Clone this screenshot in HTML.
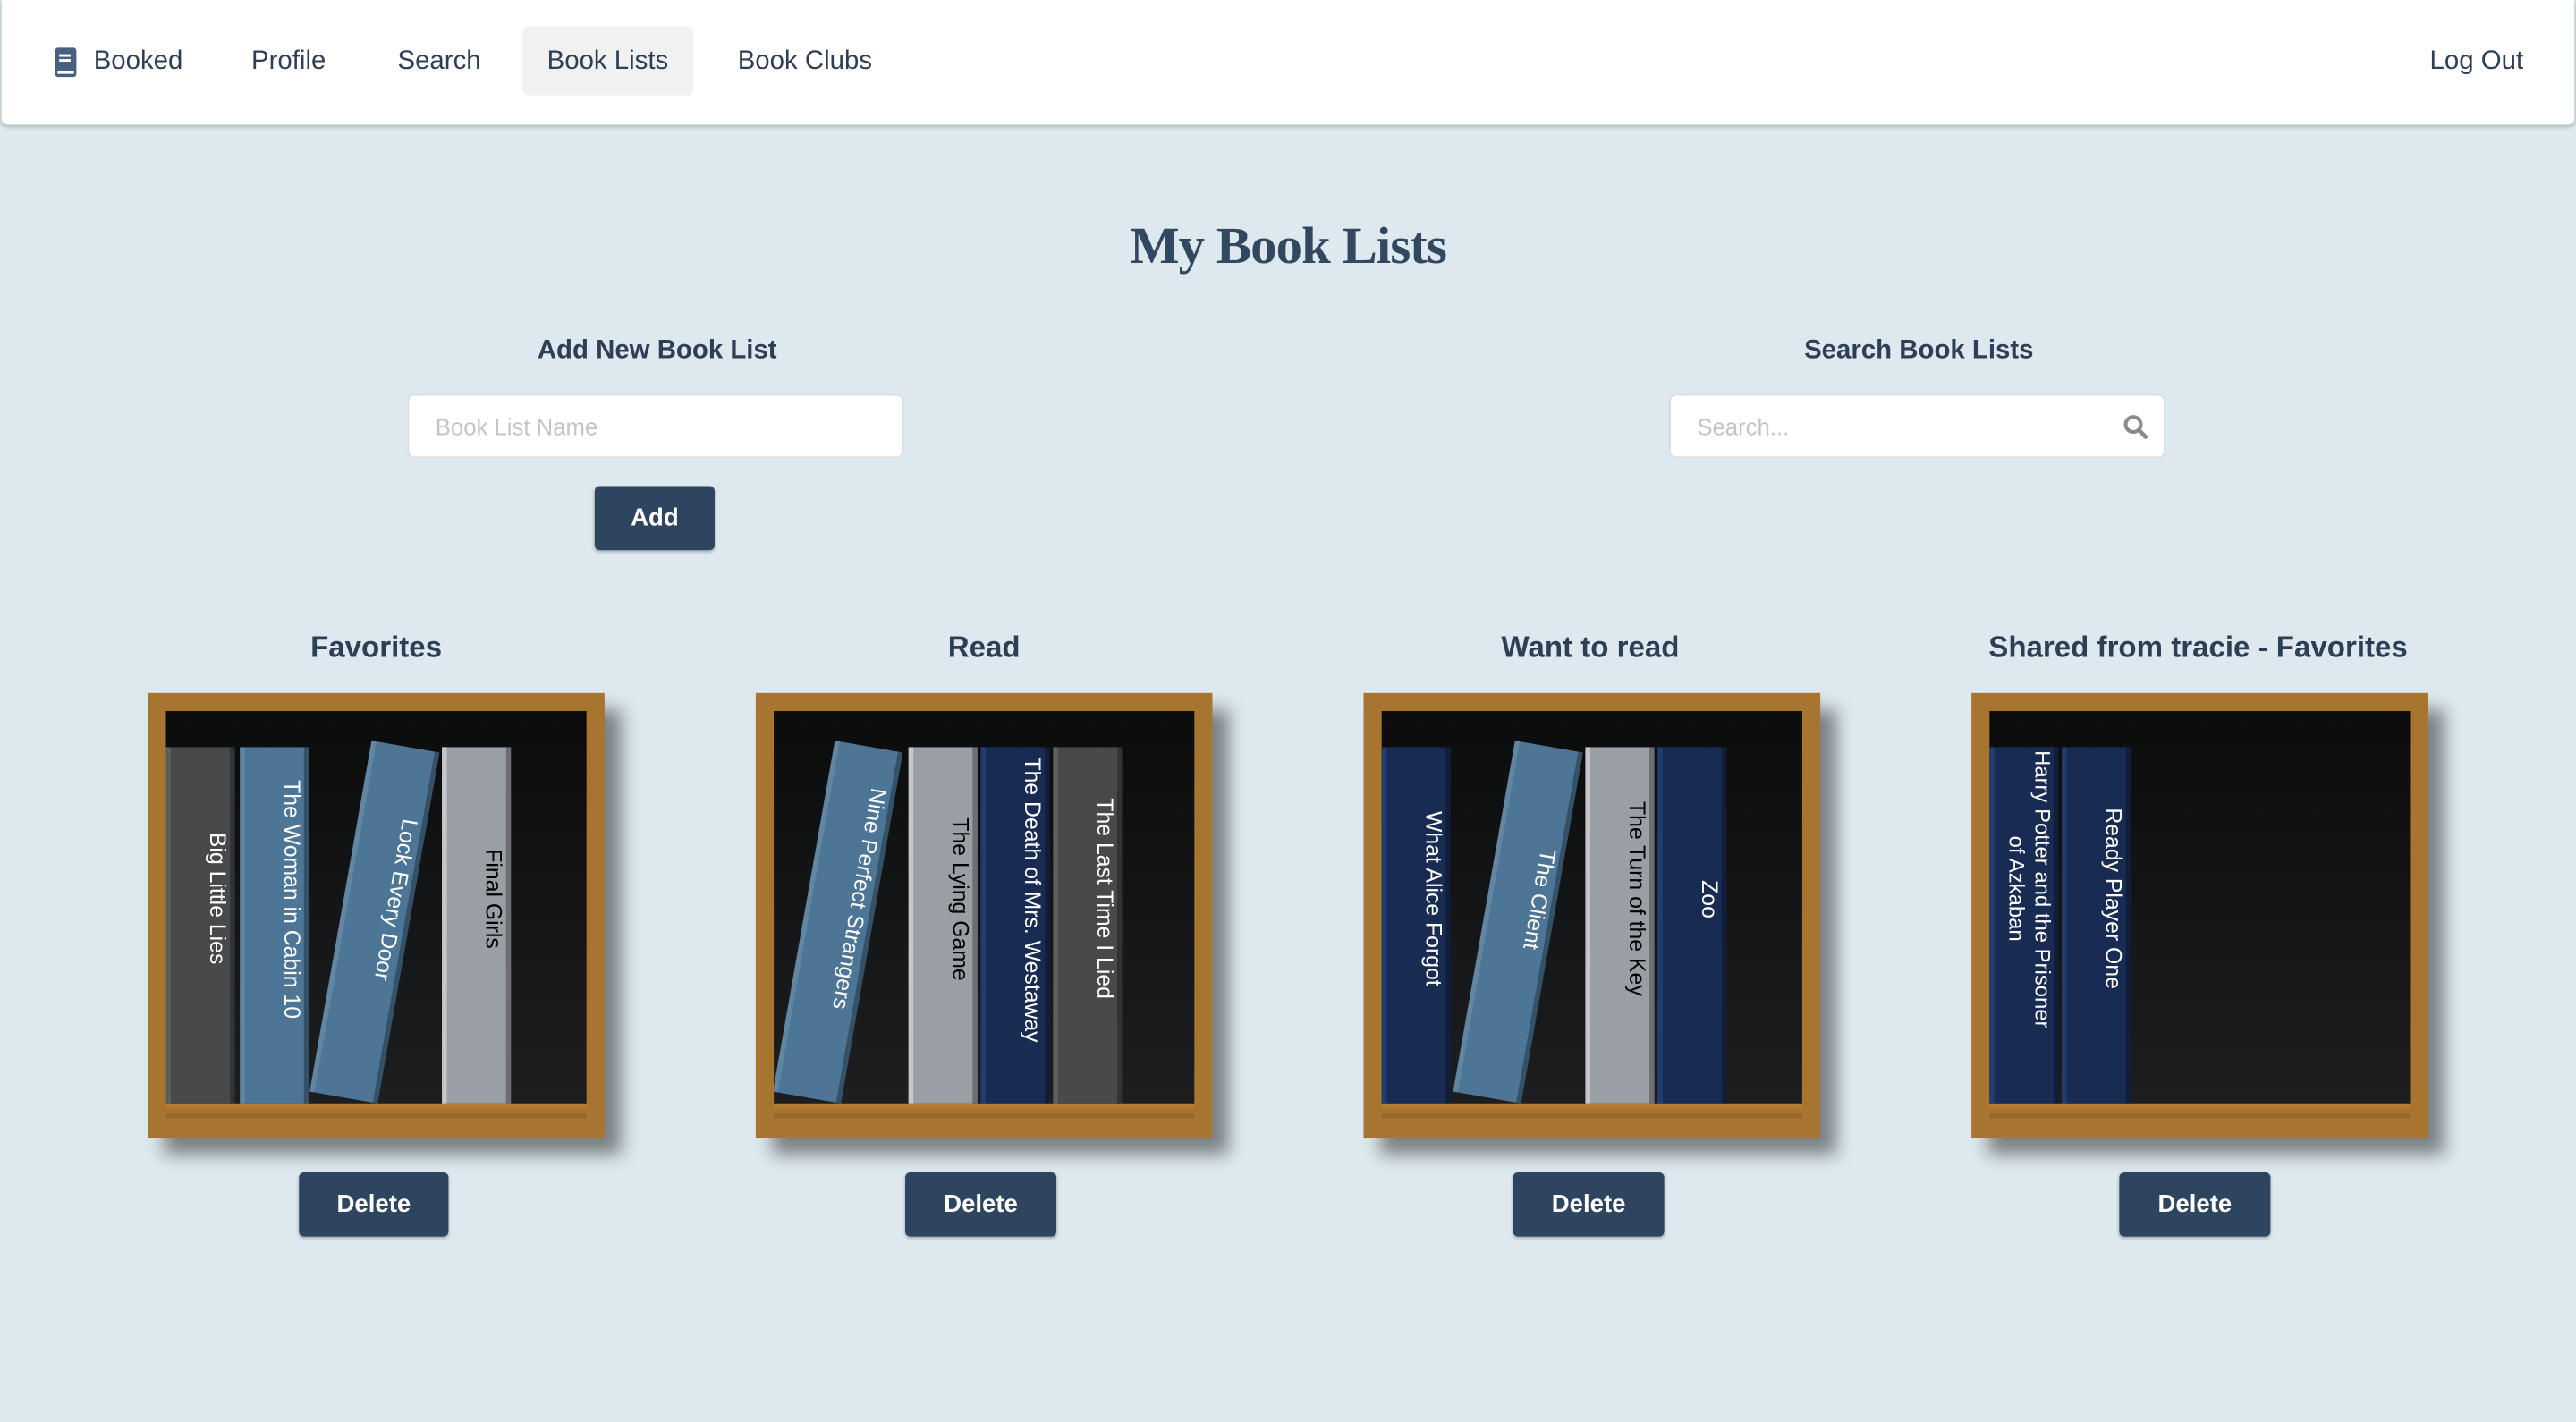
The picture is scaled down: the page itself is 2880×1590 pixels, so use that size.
<!DOCTYPE html>
<html><head><meta charset="utf-8"><style>
html,body{margin:0;padding:0;width:2880px;height:1590px;overflow:hidden;background:#dde9ef}
#w{position:absolute;left:0;top:0;width:1568px;height:866px;transform:scale(1.83674,1.8361);transform-origin:0 0;font-family:"Liberation Sans",sans-serif;color:#2e3f55}
.nav{position:absolute;left:1px;top:0;width:1566px;height:76px;background:#fff;border-radius:0 0 4px 4px;box-shadow:0 1px 3px rgba(0,0,0,.25)}
.ni{position:absolute;top:16px;height:42px;line-height:44px;font-size:16px;color:#2e3f55}
.act{background:#f1f1f1;border-radius:4px;padding:0 15px}
h1{position:absolute;left:0;width:1568px;top:131px;margin:0;text-align:center;font-family:"Liberation Serif",serif;font-weight:bold;font-size:32px;color:#324860;letter-spacing:-0.5px}
.lbl{position:absolute;font-size:16px;font-weight:bold;text-align:center;width:304px}
.inp{position:absolute;width:302px;height:39px;background:#fff;border:1px solid #ddd;border-radius:4px;font-size:14px;color:#c4c4c4;line-height:39px;box-sizing:border-box;padding-left:16px}
.btn{position:absolute;height:39px;background:#2e4560;color:#fff;font-weight:bold;font-size:15px;text-align:center;line-height:39px;border-radius:3px;box-shadow:0 1px 2px rgba(0,0,0,.3)}
.title{position:absolute;top:384px;width:370px;text-align:center;font-size:18px;font-weight:bold;color:#2e3f55}
.shelf{position:absolute;top:422px;width:278px;height:271px;background:#a87530;box-shadow:10px 10px 10px rgba(0,0,0,.45)}
.inner{position:absolute;left:11px;top:11px;width:256px;height:239px;background:linear-gradient(#0b0c0c,#1d1e20);overflow:hidden}
.board{position:absolute;left:11px;top:250px;width:256px;height:3px;background:#b57c33}
.board2{position:absolute;left:11px;top:256px;width:256px;height:3px;background:#9a672a}
.b{position:absolute;top:22px;width:42px;height:217px;box-sizing:border-box;border-left:3px solid rgba(255,255,255,.12);border-right:3px solid rgba(0,0,0,.3);writing-mode:vertical-rl;display:flex;align-items:center;justify-content:center;padding-bottom:32px;padding-left:20px;font-size:13.5px;color:#fff;line-height:16px;text-align:center}
.g{background:#48494b}.bl{background:#4d7595}.lg{background:#9a9ea5;color:#000;border-left-color:#c4c6ca}.nv{background:#182b52;border-left-color:#213d70}
.t{transform:rotate(10deg);top:20px}
</style></head><body><div id="w">
<div class="nav">
 <svg style="position:absolute;left:32px;top:29px" width="14" height="18" viewBox="0 0 14 18"><rect x="0.5" y="0" width="13" height="18" rx="2" fill="#48607e"/><rect x="3" y="4" width="7" height="1.6" fill="#fff"/><rect x="3" y="7" width="7" height="1.6" fill="#fff"/><rect x="2" y="14" width="10" height="2" fill="#fff"/></svg>
 <div class="ni" style="left:56px">Booked</div>
 <div class="ni" style="left:152px">Profile</div>
 <div class="ni" style="left:241px">Search</div>
 <div class="ni act" style="left:317px">Book Lists</div>
 <div class="ni" style="left:448px">Book Clubs</div>
 <div class="ni" style="left:1478px">Log Out</div>
</div>
<h1>My Book Lists</h1>
<div class="lbl" style="left:248px;top:205px">Add New Book List</div>
<div class="inp" style="left:248px;top:240px">Book List Name</div>
<div class="btn" style="left:362px;top:296px;width:73px">Add</div>
<div class="lbl" style="left:1016px;top:205px">Search Book Lists</div>
<div class="inp" style="left:1016px;top:240px">Search...</div>
<svg style="position:absolute;left:1292px;top:252px" width="16" height="16" viewBox="0 0 16 16"><circle cx="6.5" cy="6.5" r="4.6" fill="none" stroke="#8a8a8a" stroke-width="2.2"/><line x1="10" y1="10" x2="14" y2="14" stroke="#8a8a8a" stroke-width="2.6" stroke-linecap="round"/></svg>

<div class="title" style="left:44px">Favorites</div>
<div class="shelf" style="left:90px"><div class="inner">
 <div class="b g" style="left:0">Big Little Lies</div>
 <div class="b bl" style="left:45px">The Woman in Cabin 10</div>
 <div class="b bl t" style="left:106px">Lock Every Door</div>
 <div class="b lg" style="left:168px">Final Girls</div>
</div><div class="board"></div><div class="board2"></div></div>
<div class="btn" style="left:182px;top:714px;width:91px">Delete</div>

<div class="title" style="left:414px">Read</div>
<div class="shelf" style="left:460px"><div class="inner">
 <div class="b bl t" style="left:18px">Nine Perfect Strangers</div>
 <div class="b lg" style="left:82px">The Lying Game</div>
 <div class="b nv" style="left:126px">The Death of Mrs. Westaway</div>
 <div class="b g" style="left:170px">The Last Time I Lied</div>
</div><div class="board"></div><div class="board2"></div></div>
<div class="btn" style="left:551px;top:714px;width:92px">Delete</div>

<div class="title" style="left:783px">Want to read</div>
<div class="shelf" style="left:830px"><div class="inner">
 <div class="b nv" style="left:0">What Alice Forgot</div>
 <div class="b bl t" style="left:62px">The Client</div>
 <div class="b lg" style="left:124px">The Turn of the Key</div>
 <div class="b nv" style="left:168px">Zoo</div>
</div><div class="board"></div><div class="board2"></div></div>
<div class="btn" style="left:921px;top:714px;width:92px">Delete</div>

<div class="title" style="left:1153px">Shared from tracie - Favorites</div>
<div class="shelf" style="left:1200px"><div class="inner">
 <div class="b nv" style="left:0;justify-content:flex-start;padding-bottom:0;padding-left:6px;padding-top:2px;font-size:13px">Harry Potter and the Prisoner<br>of Azkaban</div>
 <div class="b nv" style="left:44px">Ready Player One</div>
</div><div class="board"></div><div class="board2"></div></div>
<div class="btn" style="left:1290px;top:714px;width:92px">Delete</div>
</div></body></html>
